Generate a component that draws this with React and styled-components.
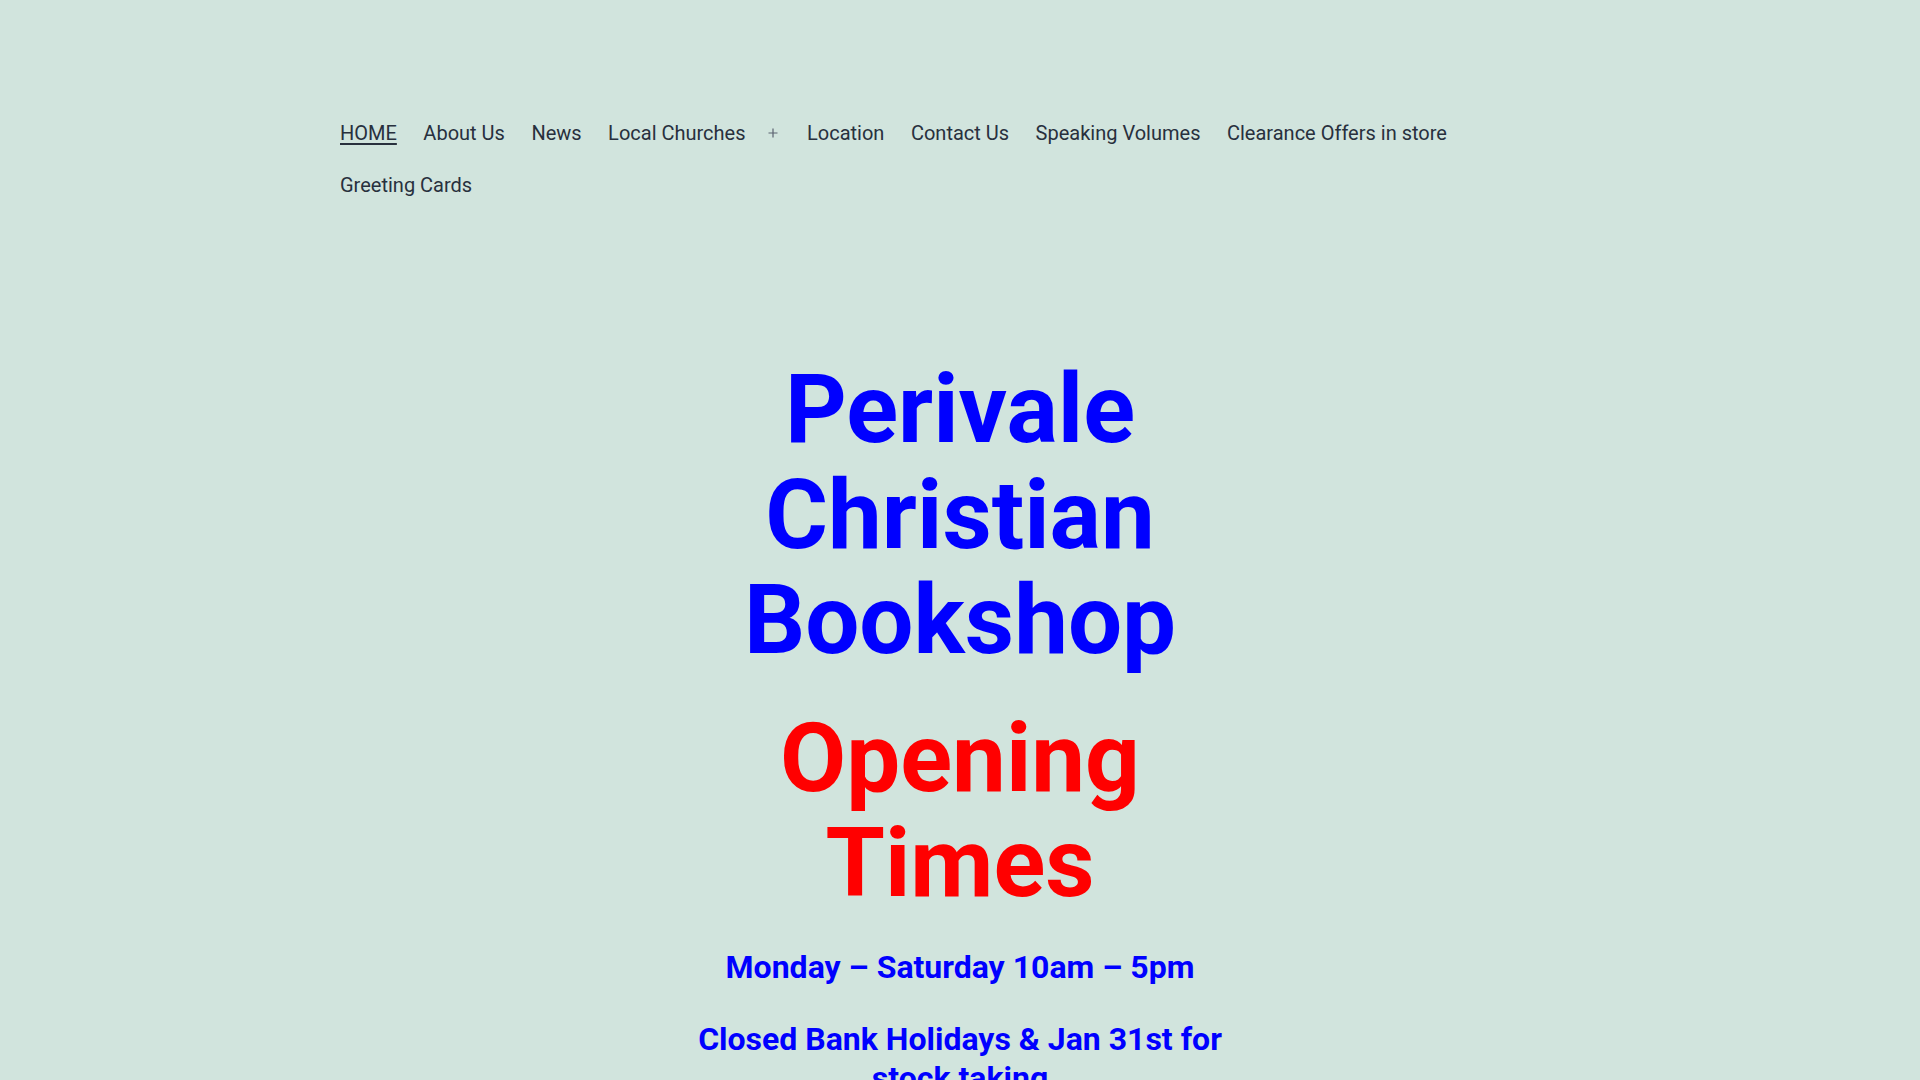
import styled, { createGlobalStyle } from 'styled-components';

const GlobalStyle = createGlobalStyle`
  html, body {
    margin: 0;
    padding: 0;
    background: #d1e4dd;
  }
  body {
    font-family: Roboto, 'Liberation Sans', sans-serif;
    color: #28303d;
  }
`;

const Page = styled.div`
  min-height: 100vh;
  background: #d1e4dd;
  overflow: hidden;
`;

const Header = styled.header`
  width: 1240px;
  margin: 0 auto;
  padding-top: 107px;
`;

const Menu = styled.ul`
  display: flex;
  flex-wrap: wrap;
  list-style: none;
  margin: 0;
  padding: 0;
  column-gap: 26.5px;
`;

const MenuItem = styled.li`
  display: flex;
  align-items: center;
`;

const MenuLink = styled.a`
  display: block;
  padding: 13px 0;
  font-size: 20px;
  line-height: 26px;
  color: #28303d;
  text-decoration: ${props => (props.$current ? 'underline' : 'none')};
  text-decoration-thickness: 2px;
  text-underline-offset: 3px;
  cursor: pointer;
`;

// кнопка подменю (+)
const SubToggle = styled.button`
  display: flex;
  align-items: center;
  justify-content: center;
  border: none;
  background: none;
  padding: 0;
  margin-left: 21px;
  margin-right: 2px;
  width: 12px;
  height: 26px;
  color: #28303d;
  cursor: pointer;
`;

const Main = styled.main`
  width: 610px;
  margin: 0 auto;
  padding-top: 146px;
  text-align: center;
`;

const Title = styled.h1`
  margin: 0;
  font-size: 96px;
  line-height: 1.1;
  font-weight: 700;
  color: ${props => props.$color || '#0000ff'};
  margin-top: ${props => props.$gap || '0'};
`;

const Hours = styled.h3`
  margin: 0;
  margin-top: ${props => props.$gap || '0'};
  font-size: 32px;
  line-height: 1.2;
  font-weight: 700;
  color: #0000ff;
`;

const PlusIcon = () => (
  <svg width="10" height="10" viewBox="0 0 10 10" fill="none">
    <path d="M5 0.5v9M0.5 5h9" stroke="#5b6270" strokeWidth="1.2" />
  </svg>
);

const items = [
  { label: 'HOME', current: true },
  { label: 'About Us' },
  { label: 'News' },
  { label: 'Local Churches', sub: true },
  { label: 'Location' },
  { label: 'Contact Us' },
  { label: 'Speaking Volumes' },
  { label: 'Clearance Offers in store' },
  { label: 'Greeting Cards' },
];

export default function App() {
  return (
    <Page>
      <GlobalStyle />
      <Header>
        <nav>
          <Menu>
            {items.map(item => (
              <MenuItem key={item.label}>
                <MenuLink $current={item.current}>{item.label}</MenuLink>
                {item.sub ? (
                  <SubToggle type="button" aria-label="Open menu">
                    <PlusIcon />
                  </SubToggle>
                ) : null}
              </MenuItem>
            ))}
          </Menu>
        </nav>
      </Header>
      <Main>
        <Title>Perivale Christian Bookshop</Title>
        <Title $color="#ff0000" $gap="32px">Opening Times</Title>
        <Hours $gap="31px">Monday – Saturday 10am – 5pm</Hours>
        <Hours $gap="34px">Closed Bank Holidays &amp; Jan 31st for stock taking</Hours>
      </Main>
    </Page>
  );
}
